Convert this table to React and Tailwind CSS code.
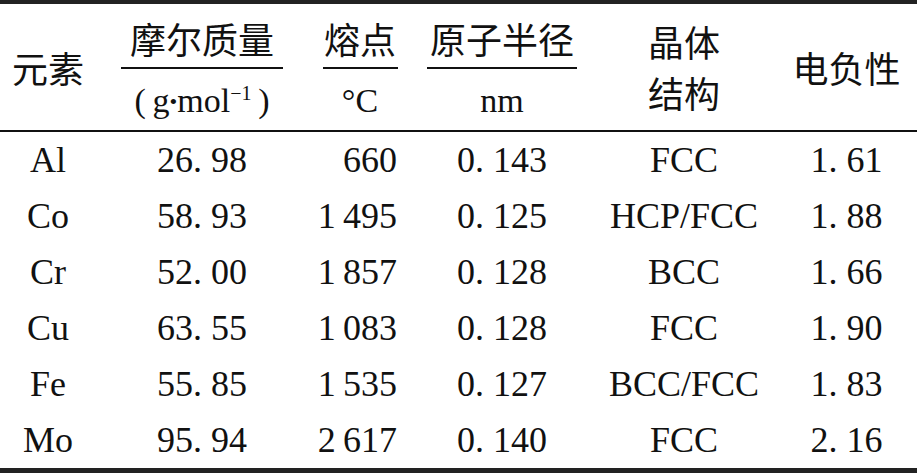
import React from 'react';

const rows = [
  ['Al', '26. 98', '660', '0. 143', 'FCC', '1. 61'],
  ['Co', '58. 93', '1\u2009495', '0. 125', 'HCP/FCC', '1. 88'],
  ['Cr', '52. 00', '1\u2009857', '0. 128', 'BCC', '1. 66'],
  ['Cu', '63. 55', '1\u2009083', '0. 128', 'FCC', '1. 90'],
  ['Fe', '55. 85', '1\u2009535', '0. 127', 'BCC/FCC', '1. 83'],
  ['Mo', '95. 94', '2\u2009617', '0. 140', 'FCC', '2. 16'],
];

const cols = 'grid grid-cols-[96px_212px_104px_180px_184px_141px]';

// CJK text gets its own family; Latin stays on Liberation Serif
function Zh({ children }) {
  return <span className="font-['Noto_Sans_CJK_SC',sans-serif]">{children}</span>;
}

function FracHead({ top, bottom, line }) {
  return (
    <div className="flex flex-col items-center">
      <div className="mt-[16px] h-[36px] leading-[36px]">
        <Zh>{top}</Zh>
      </div>
      <div className={`mt-[11px] h-[2px] bg-[#111] ${line}`} />
      <div className="mt-[13px] h-[36px] leading-[36px]">{bottom}</div>
    </div>
  );
}

export default function App() {
  return (
    <div className="w-[917px] h-[473px] bg-white text-[#111] text-[36px] overflow-hidden font-['Liberation_Serif',serif]">
      <div className="h-[4px] bg-[#222]" />

      {/* header */}
      <div className={`${cols} h-[126px]`}>
        <div className="flex items-center justify-center">
          <Zh>元素</Zh>
        </div>
        <FracHead
          top="摩尔质量"
          line="w-[162px]"
          bottom={
            <span className="text-[34px]">
              (&thinsp;g<span className="text-[22px] relative -top-[3px]">•</span>mol
              <sup className="text-[20px] -top-[12px]">−1</sup>&thinsp;)
            </span>
          }
        />
        <FracHead top="熔点" line="w-[75px]" bottom={<span className="text-[34px]">°C</span>} />
        <FracHead top="原子半径" line="w-[150px]" bottom={<span className="text-[34px]">nm</span>} />
        <div className="flex flex-col items-center justify-center leading-[51px]">
          <Zh>晶体</Zh>
          <Zh>结构</Zh>
        </div>
        <div className="flex items-center justify-center">
          <Zh>电负性</Zh>
        </div>
      </div>
      <div className="h-[2px] bg-[#111]" />

      {/* body */}
      {rows.map(r => (
        <div key={r[0]} className={`${cols} h-[56px] items-center leading-none`}>
          <div className="text-center">{r[0]}</div>
          <div className="text-center">{r[1]}</div>
          <div className="text-right pr-[15px]">{r[2]}</div>
          <div className="text-center">{r[3]}</div>
          <div className="text-center">{r[4]}</div>
          <div className="text-center">{r[5]}</div>
        </div>
      ))}

      <div className="h-[5px] bg-[#222]" />
    </div>
  );
}
